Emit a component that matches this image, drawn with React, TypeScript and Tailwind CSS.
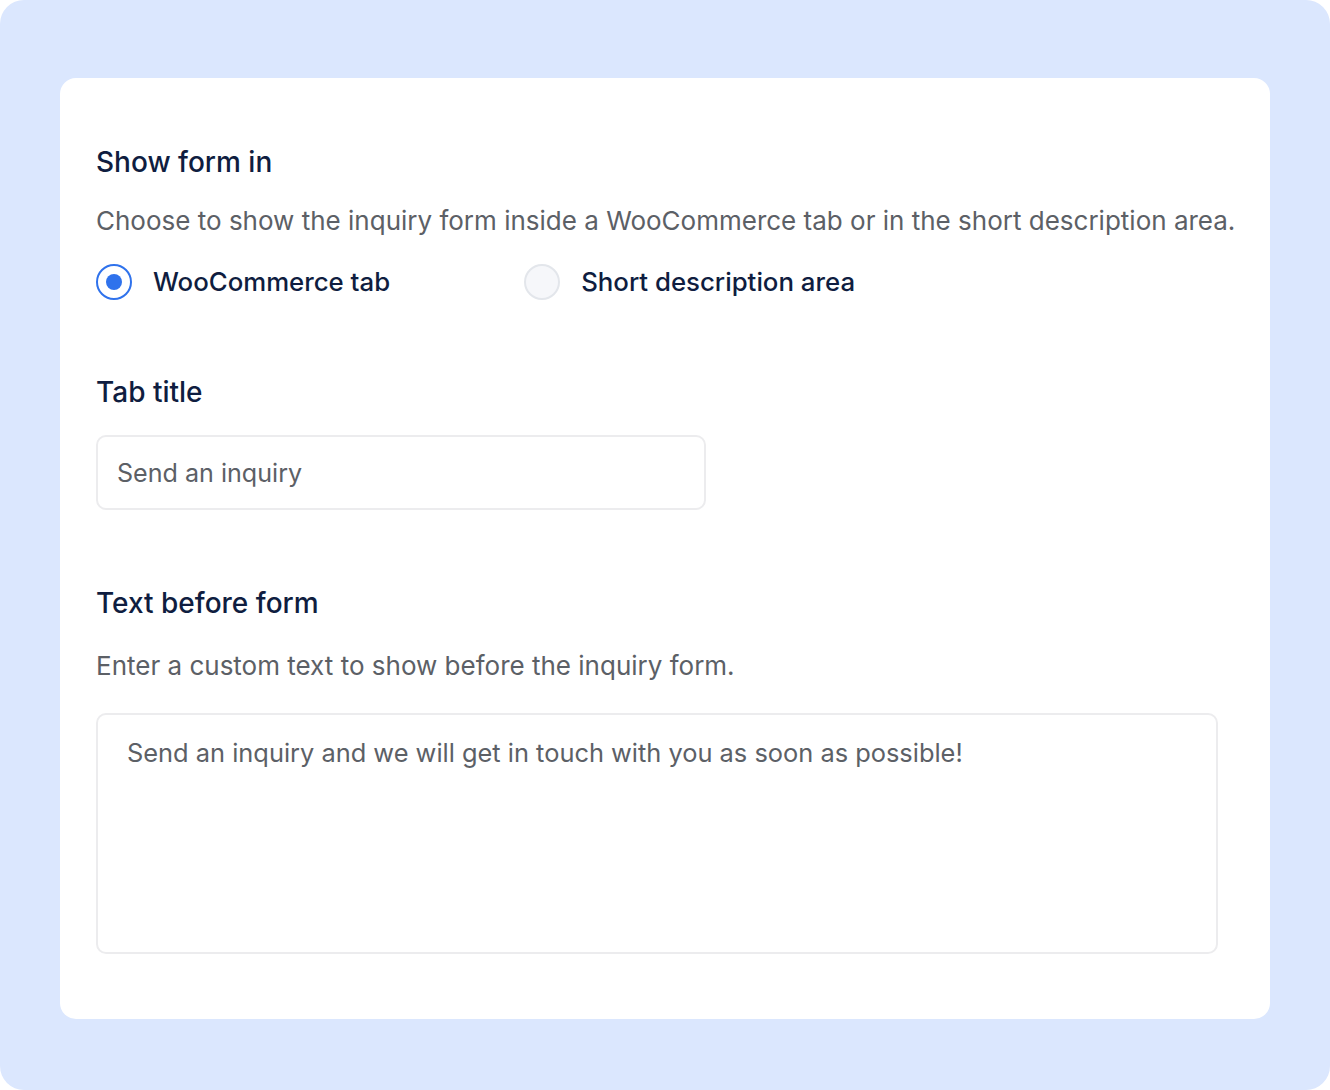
import React, { useState } from 'react';

const font = { fontFamily: 'Inter, "Noto Sans", sans-serif' };

// 单选按钮
const Radio = ({ checked, label, onClick }: { checked: boolean; label: string; onClick: () => void }) => (
  <button className="flex items-center gap-[21px]" onClick={onClick} type="button">
    {checked ? (
      <span className="flex h-9 w-9 items-center justify-center rounded-full border-2 border-[#2f72ec] bg-white">
        <span className="h-4 w-4 rounded-full bg-[#2f72ec]" />
      </span>
    ) : (
      <span className="h-9 w-9 rounded-full border-2 border-[#e3e6eb] bg-[#f6f7fa]" />
    )}
    <span className="text-[25.8px] font-medium leading-8 text-[#0f1d40]">{label}</span>
  </button>
);

export default function App() {
  const [where, setWhere] = useState<'tab' | 'short'>('tab');

  return (
    <div className="h-[1090px] w-[1330px] bg-white" style={font}>
      <div className="h-full w-full rounded-[24px] bg-[#dbe7fe] pl-[60px] pt-[78px]">
        <div className="w-[1210px] rounded-[16px] bg-white px-9 pb-[65px] pt-[68px]">
          <h2 className="text-[28px] font-medium leading-8 text-[#0f1d40]">Show form in</h2>
          <p className="mt-[27px] whitespace-nowrap text-[26px] leading-8 text-[#5c6066]">
            Choose to show the inquiry form inside a WooCommerce tab or in the short description area.
          </p>
          <div className="mt-[27px] flex items-center gap-[134px]">
            <Radio checked={where === 'tab'} label="WooCommerce tab" onClick={() => setWhere('tab')} />
            <Radio checked={where === 'short'} label="Short description area" onClick={() => setWhere('short')} />
          </div>

          <h2 className="mt-[76px] text-[28px] font-medium leading-8 text-[#0f1d40]">Tab title</h2>
          <input
            className="mt-[27px] block h-[75px] w-[610px] rounded-[10px] border-2 border-[#ececee] px-[19px] text-[25.1px] text-[#5c6066] outline-none"
            defaultValue="Send an inquiry"
            style={font}
          />

          <h2 className="mt-[77px] text-[28px] font-medium leading-8 text-[#0f1d40]">Text before form</h2>
          <p className="mt-[31px] text-[26px] leading-8 text-[#5c6066]">
            Enter a custom text to show before the inquiry form.
          </p>
          <textarea
            className="mt-[31px] block h-[241px] w-[1122px] resize-none rounded-[10px] border-2 border-[#ececee] px-[29px] py-[22px] text-[25.4px] leading-8 text-[#5c6066] outline-none"
            defaultValue="Send an inquiry and we will get in touch with you as soon as possible!"
            style={font}
          />
        </div>
      </div>
    </div>
  );
}
